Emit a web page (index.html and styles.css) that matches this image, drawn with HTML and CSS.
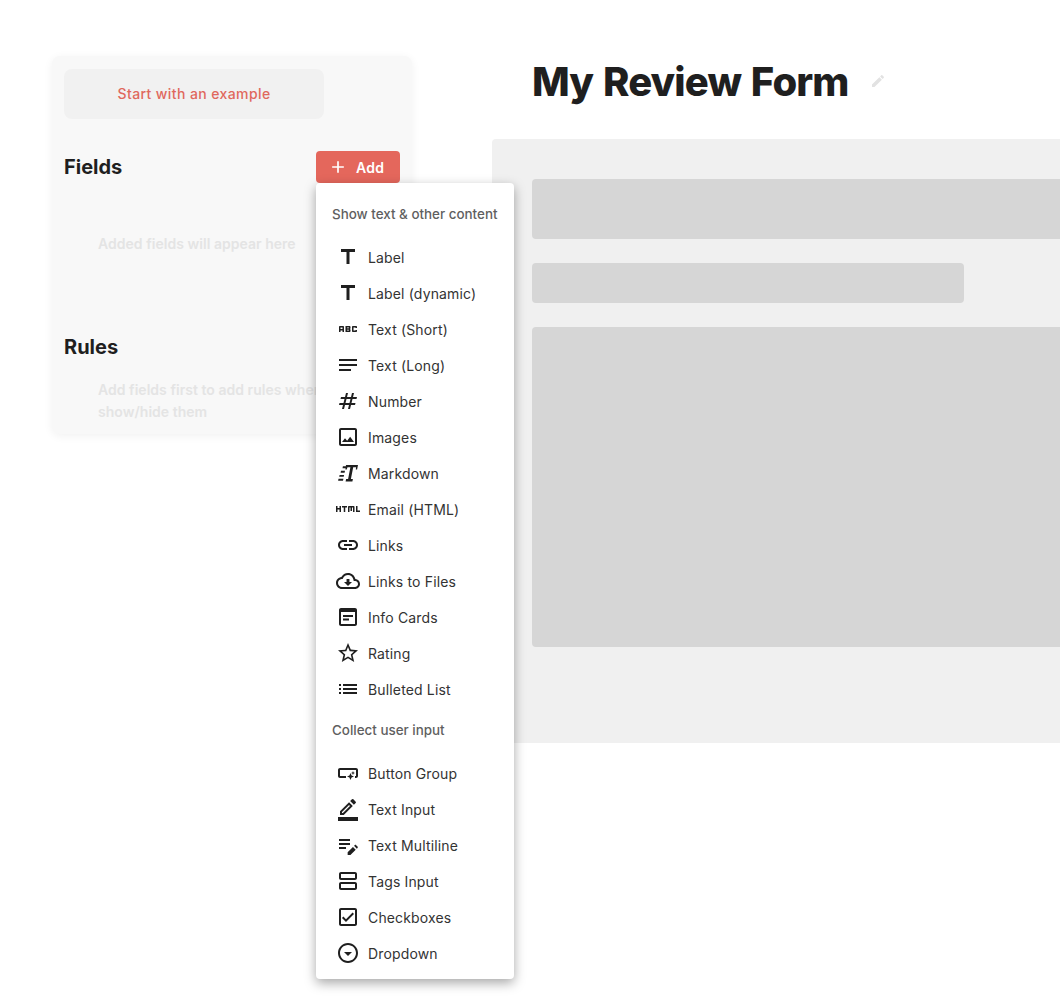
FILE: index.html
```html
<!DOCTYPE html>
<html lang="en">
<head>
    <meta charset="UTF-8">
    <meta name="viewport" content="width=device-width, initial-scale=1.0">
    <title>My Review Form</title>
    <link rel="stylesheet" href="styles.css">
</head>
<body>
    <div class="page">
        <aside class="sidebar">
            <button class="example-btn">Start with an example</button>

            <div class="section-head">
                <h2>Fields</h2>
                <div class="add-wrap">
                    <button class="add-btn">
                        <svg viewBox="0 0 24 24" width="20" height="20"><path d="M19 13h-6v6h-2v-6H5v-2h6V5h2v6h6v2z"/></svg>
                        Add
                    </button>

                    <div class="menu">
                        <div class="menu-label">Show text &amp; other content</div>
                        <a class="menu-item"><svg viewBox="0 0 24 24"><path d="M5 4v3h5.5v12h3V7H19V4z"/></svg>Label</a>
                        <a class="menu-item"><svg viewBox="0 0 24 24"><path d="M5 4v3h5.5v12h3V7H19V4z"/></svg>Label (dynamic)</a>
                        <a class="menu-item"><svg viewBox="0 0 24 24"><path d="M21 11h-1.5v-.5h-2v3h2V13H21v1c0 .55-.45 1-1 1h-3c-.55 0-1-.45-1-1v-4c0-.55.45-1 1-1h3c.55 0 1 .45 1 1v1zM8 10v5H6.5v-1.5h-2V15H3v-5c0-.55.45-1 1-1h3c.55 0 1 .45 1 1zm-1.5.5h-2V12h2v-1.5zm7 1.5c.55 0 1 .45 1 1v1c0 .55-.45 1-1 1h-4V9h4c.55 0 1 .45 1 1v1c0 .55-.45 1-1 1zM11 10.5v.75h2v-.75h-2zm2 2.25h-2v.75h2v-.75z"/></svg>Text (Short)</a>
                        <a class="menu-item"><svg viewBox="0 0 24 24"><path d="M21 11.01L3 11v2h18zM3 16h12v2H3zM21 6H3v2.01L21 8z"/></svg>Text (Long)</a>
                        <a class="menu-item"><svg viewBox="0 0 24 24"><path d="M20.5 10l.5-2h-4l1-4h-2l-1 4h-4l1-4h-2L9 8H5l-.5 2h4l-1 4h-4L3 16h4l-1 4h2l1-4h4l-1 4h2l1-4h4l.5-2h-4l1-4h4zm-7 4h-4l1-4h4l-1 4z"/></svg>Number</a>
                        <a class="menu-item"><svg viewBox="0 0 24 24"><path d="M19 5v14H5V5h14m0-2H5c-1.1 0-2 .9-2 2v14c0 1.1.9 2 2 2h14c1.1 0 2-.9 2-2V5c0-1.1-.9-2-2-2zm-4.86 8.86l-3 3.87L9 13.14 6 17h12l-3.86-5.14z"/></svg>Images</a>
                        <a class="menu-item"><svg viewBox="0 0 24 24"><path d="M10 4h12l-.9 4.500h-1.300l.3-2.300h-2.900L14.900 18h2l-.5 2.400H9.600l.5-2.400h2l2.300-11.800h-2.900l-.8 2.300H9.400zM6.900 5.200h3l-.4 2H6.500zM5 9.700h4l-.4 2h-4zM3.600 14h4.500l-.4 1.800H3.200zM2.500 17.700h4.900l-.4 2H2.100z"/></svg>Markdown</a>
                        <a class="menu-item"><svg viewBox="0 0 24 24"><path d="M3.500 9H5v6H3.500v-2.500h-2V15H0V9h1.500v2h2V9zm14 0H13c-.55 0-1 .45-1 1v5h1.500v-4.500h1V14H16v-3.510h1V15h1.500v-5c0-.55-.45-1-1-1zM11 9H6v1.500h1.750V15h1.500v-4.500H11V9zm13 6v-1.500h-2.500V9H20v6h4z"/></svg>Email (HTML)</a>
                        <a class="menu-item"><svg viewBox="0 0 24 24"><path d="M17 7h-4v2h4c1.650 0 3 1.350 3 3s-1.350 3-3 3h-4v2h4c2.760 0 5-2.240 5-5s-2.240-5-5-5zm-6 8H7c-1.650 0-3-1.350-3-3s1.350-3 3-3h4V7H7c-2.760 0-5 2.240-5 5s2.240 5 5 5h4v-2zm-3-4h8v2H8z"/></svg>Links</a>
                        <a class="menu-item"><svg viewBox="0 0 24 24"><path d="M19.350 10.040C18.670 6.590 15.640 4 12 4 9.110 4 6.600 5.640 5.350 8.040 2.340 8.360 0 10.910 0 14c0 3.310 2.690 6 6 6h13c2.760 0 5-2.240 5-5 0-2.640-2.050-4.780-4.650-4.960zM19 18H6c-2.210 0-4-1.790-4-4 0-2.050 1.530-3.760 3.560-3.970l1.070-.11.5-.95C8.080 7.140 9.940 6 12 6c2.620 0 4.880 1.860 5.390 4.430l.3 1.500 1.530.11c1.560.1 2.780 1.410 2.780 2.960 0 1.650-1.350 3-3 3zm-5.550-8h-2.900v3H8l4 4 4-4h-2.550z"/></svg>Links to Files</a>
                        <a class="menu-item"><svg viewBox="0 0 24 24"><path d="M19 3H5c-1.100 0-2 .9-2 2v14c0 1.100.9 2 2 2h14c1.100 0 2-.9 2-2V5c0-1.100-.9-2-2-2zm0 16H5V7h14v12zM7 10h10v2H7zm0 3.500h6v2H7z"/></svg>Info Cards</a>
                        <a class="menu-item"><svg viewBox="0 0 24 24"><path d="M22 9.240l-7.190-.62L12 2 9.190 8.630 2 9.240l5.460 4.730L5.820 21 12 17.270 18.180 21l-1.630-7.030L22 9.240zM12 15.400l-3.760 2.270 1-4.280-3.320-2.880 4.380-.38L12 6.100l1.710 4.040 4.380.38-3.320 2.880 1 4.280L12 15.400z"/></svg>Rating</a>
                        <a class="menu-item"><svg viewBox="0 0 24 24"><path d="M3 13h2v-2H3v2zm0 4h2v-2H3v2zm0-8h2V7H3v2zm4 4h14v-2H7v2zm0 4h14v-2H7v2zM7 7v2h14V7H7z"/></svg>Bulleted List</a>

                        <div class="menu-label">Collect user input</div>
                        <a class="menu-item"><svg viewBox="0 0 24 24"><path d="M22 9v6c0 1.100-.9 2-2 2h-1v-2h1V9H4v6h6v2H4c-1.100 0-2-.9-2-2V9c0-1.100.9-2 2-2h16c1.100 0 2 .9 2 2zm-7.500 10l1.090-2.410L18 15.500l-2.410-1.090L14.500 12l-1.090 2.410L11 15.500l2.410 1.090L14.500 19zm2.500-5l.62-1.380L19 12l-1.380-.62L17 10l-.62 1.380L15 12l1.380.62L17 14z"/></svg>Button Group</a>
                        <a class="menu-item"><svg viewBox="0 0 24 24"><path d="M16.810 8.940l-3.750-3.750L4 14.250V18h3.750l9.060-9.060zM6 16v-.92l7.060-7.060.92.92L6.920 16H6zm13.710-9.960c.39-.39.39-1.020 0-1.410l-2.340-2.340a.996.996 0 00-1.410 0l-1.830 1.830 3.750 3.750 1.830-1.830zM2 20h20v4H2z"/></svg>Text Input</a>
                        <a class="menu-item"><svg viewBox="0 0 24 24"><path d="M3 10h11v2H3v-2zm0-2h11V6H3v2zm0 8h7v-2H3v2zm15.010-3.130l.71-.71c.39-.39 1.020-.39 1.410 0l1.410 1.410c.39.39.39 1.020 0 1.410l-.71.71-2.820-2.820zm-1.060 1.060L11.650 19.230V22h2.770l5.300-5.300-2.770-2.770z"/></svg>Text Multiline</a>
                        <a class="menu-item"><svg viewBox="0 0 24 24"><path d="M19 13H5c-1.100 0-2 .9-2 2v4c0 1.100.9 2 2 2h14c1.100 0 2-.9 2-2v-4c0-1.100-.9-2-2-2zm0 6H5v-4h14v4zM19 3H5c-1.100 0-2 .9-2 2v4c0 1.100.9 2 2 2h14c1.100 0 2-.9 2-2V5c0-1.100-.9-2-2-2zm0 6H5V5h14v4z"/></svg>Tags Input</a>
                        <a class="menu-item"><svg viewBox="0 0 24 24"><path d="M19 3H5c-1.100 0-2 .9-2 2v14c0 1.100.9 2 2 2h14c1.100 0 2-.9 2-2V5c0-1.100-.9-2-2-2zm0 16H5V5h14v14zM17.990 9l-1.410-1.420-6.590 6.590-2.580-2.570-1.420 1.410 4 3.990z"/></svg>Checkboxes</a>
                        <a class="menu-item"><svg viewBox="0 0 24 24"><path d="M12 4c4.410 0 8 3.590 8 8s-3.590 8-8 8-8-3.590-8-8 3.590-8 8-8m0-2C6.480 2 2 6.480 2 12s4.480 10 10 10 10-4.480 10-10S17.520 2 12 2zm0 13l-4-4h8z"/></svg>Dropdown</a>
                    </div>
                </div>
            </div>

            <p class="empty-fields">Added fields will appear here</p>

            <div class="section-head">
                <h2>Rules</h2>
            </div>
            <p class="empty-rules">Add fields first to add rules when to show/hide them</p>
        </aside>

        <main class="content">
            <div class="title-row">
                <h1>My Review Form</h1>
                <svg class="edit-icon" viewBox="0 0 24 24"><path d="M3 17.250V21h3.750L17.810 9.940l-3.750-3.750L3 17.250zM20.710 7.040c.39-.39.39-1.020 0-1.410l-2.340-2.340c-.39-.39-1.020-.39-1.410 0l-1.830 1.830 3.750 3.750 1.830-1.830z"/></svg>
            </div>
            <div class="form-card">
                <div class="ghost ghost-title"></div>
                <div class="ghost ghost-short"></div>
                <div class="ghost ghost-body"></div>
            </div>
        </main>
    </div>
</body>
</html>
```

FILE: styles.css
```css
body {
    margin: 0;
    font-family: Inter, "Liberation Sans", sans-serif;
    background-color: white;
    color: #1f1f1f;
}
.page {
    display: flex;
    align-items: flex-start;
    height: 996px;
    padding: 56px 0 0 52px;
    box-sizing: border-box;
    overflow: hidden;
}
.sidebar {
    flex: none;
    width: 360px;
    box-sizing: border-box;
    padding: 13px 12px 11px;
    background-color: #f8f8f8;
    border-radius: 8px;
    box-shadow: 0 2px 10px rgba(0,0,0,0.06);
}
.example-btn {
    display: block;
    width: 260px;
    height: 50px;
    padding-bottom: 2px;
    border: none;
    border-radius: 8px;
    background-color: #f1f1f1;
    color: #e0685d;
    font-family: inherit;
    font-size: 14px;
    font-weight: 500;
    letter-spacing: 0.4px;
}
.section-head {
    display: flex;
    justify-content: space-between;
    align-items: center;
    height: 32px;
    margin-top: 32px;
}
.section-head h2 {
    margin: 0;
    font-size: 20px;
    font-weight: 700;
    color: #1f1f1f;
}
.add-wrap {
    position: relative;
}
.add-btn {
    display: flex;
    align-items: center;
    gap: 8px;
    width: 84px;
    height: 32px;
    padding: 0 0 0 12px;
    border: none;
    border-radius: 4px;
    background-color: #e4675c;
    color: white;
    font-family: inherit;
    font-size: 14px;
    font-weight: 600;
    letter-spacing: 0.3px;
}
.add-btn svg {
    fill: white;
}
.menu {
    position: absolute;
    top: 100%;
    left: 0;
    z-index: 10;
    width: 198px;
    padding: 8px 0;
    background-color: white;
    border-radius: 4px;
    box-shadow: 0 4px 12px rgba(0,0,0,0.35);
}
.menu-label {
    height: 46px;
    padding: 0 0 2px 16px;
    font-size: 13.4px;
    font-weight: 500;
    line-height: 46px;
    color: #5f5f5f;
    white-space: nowrap;
}
.menu-item {
    display: flex;
    align-items: center;
    gap: 8px;
    height: 36px;
    padding-left: 20px;
    font-size: 14px;
    letter-spacing: 0.15px;
    color: #333;
}
.menu-item svg {
    flex: none;
    width: 24px;
    height: 24px;
    fill: #1f1f1f;
}
.empty-fields {
    margin: 50px 0 76px 34px;
    font-size: 14px;
    font-weight: 600;
    line-height: 22px;
    letter-spacing: 0.03px;
    color: #e4e4e4;
}
.empty-rules {
    margin: 16px 0 0 34px;
    font-size: 14px;
    font-weight: 600;
    line-height: 22px;
    letter-spacing: 0.03px;
    color: #e4e4e4;
}
.content {
    flex: none;
    width: 800px;
    margin-left: 80px;
}
.title-row {
    display: flex;
    align-items: center;
    gap: 21px;
    height: 50px;
    margin-bottom: 33px;
    padding-left: 40px;
}
.title-row h1 {
    margin: 0;
    font-size: 40px;
    font-weight: 800;
    letter-spacing: -0.9px;
    word-spacing: 2px;
    color: #1f1f1f;
    white-space: nowrap;
}
.edit-icon {
    width: 16px;
    height: 16px;
    fill: #e2e2e2;
}
.form-card {
    display: flex;
    flex-direction: column;
    gap: 24px;
    padding: 40px 0 96px 40px;
    background-color: #f0f0f0;
    border-radius: 4px;
}
.ghost {
    background-color: #d6d6d6;
    border-radius: 4px;
}
.ghost-title {
    height: 60px;
}
.ghost-short {
    width: 432px;
    height: 40px;
}
.ghost-body {
    height: 320px;
}
```
